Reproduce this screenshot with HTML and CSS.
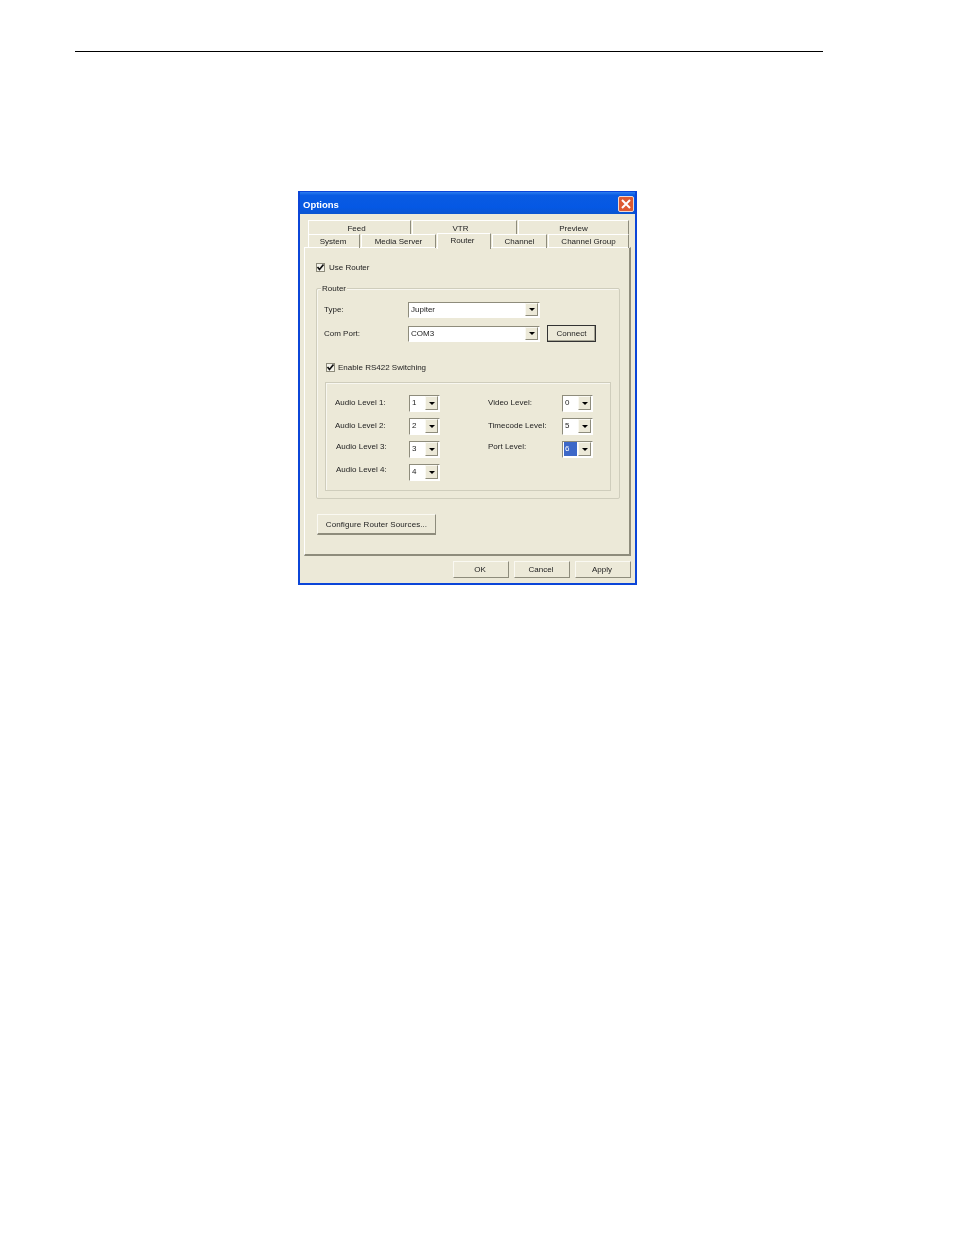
FILE: index.html
```html
<!DOCTYPE html>
<html lang="en">
<head>
    <meta charset="UTF-8">
    <title>Options</title>
    <link rel="stylesheet" href="styles.css">
</head>
<body>
    <!-- Page header rule -->
    <div class="page-rule"></div>

    <div class="dialog">
        <div class="title-bar">
            <span class="title-text">Options</span>
            <div class="close-btn">
                <svg width="14" height="14" viewBox="0 0 14 14">
                    <path d="M3 3L11 11M11 3L3 11" stroke="#fff" stroke-width="2" fill="none"/>
                </svg>
            </div>
        </div>

        <!-- Two rows of tabs -->
        <div class="tabs">
            <div class="tab-row">
                <div class="tab t-feed">Feed</div>
                <div class="tab t-vtr">VTR</div>
                <div class="tab t-preview">Preview</div>
            </div>
            <div class="tab-row front">
                <div class="tab t-system">System</div>
                <div class="tab t-media">Media Server</div>
                <div class="tab t-router active">Router</div>
                <div class="tab t-channel">Channel</div>
                <div class="tab t-group">Channel Group</div>
            </div>
        </div>

        <div class="panel">
            <div class="check-row">
                <div class="check">
                    <svg width="9" height="9" viewBox="0 0 9 9"><path d="M1.5 4L3.5 6.5L7.5 1.5" stroke="#111" stroke-width="1.7" fill="none"/></svg>
                </div>
                <span>Use Router</span>
            </div>

            <div class="group">
                <div class="legend">Router</div>

                <div class="form-row">
                    <label class="form-label">Type:</label>
                    <div class="combo combo-wide"><span class="value">Jupiter</span><span class="arrow"></span></div>
                </div>
                <div class="form-row">
                    <label class="form-label">Com Port:</label>
                    <div class="combo combo-wide"><span class="value">COM3</span><span class="arrow"></span></div>
                    <div class="btn btn-connect">Connect</div>
                </div>

                <div class="check-row check-enable">
                    <div class="check">
                        <svg width="9" height="9" viewBox="0 0 9 9"><path d="M1.5 4L3.5 6.5L7.5 1.5" stroke="#111" stroke-width="1.7" fill="none"/></svg>
                    </div>
                    <span>Enable RS422 Switching</span>
                </div>

                <div class="levels">
                    <label>Audio Level 1:</label>
                    <div class="combo"><span class="value">1</span><span class="arrow"></span></div>
                    <label>Video Level:</label>
                    <div class="combo"><span class="value">0</span><span class="arrow"></span></div>

                    <label>Audio Level 2:</label>
                    <div class="combo"><span class="value">2</span><span class="arrow"></span></div>
                    <label>Timecode Level:</label>
                    <div class="combo"><span class="value">5</span><span class="arrow"></span></div>

                    <label class="nudge raised">Audio Level 3:</label>
                    <div class="combo"><span class="value">3</span><span class="arrow"></span></div>
                    <label class="raised">Port Level:</label>
                    <div class="combo"><span class="value selected">6</span><span class="arrow"></span></div>

                    <label class="nudge raised">Audio Level 4:</label>
                    <div class="combo"><span class="value">4</span><span class="arrow"></span></div>
                </div>
            </div>

            <div class="btn btn-sources">Configure Router Sources...</div>
        </div>

        <div class="footer">
            <div class="btn btn-foot">OK</div>
            <div class="btn btn-foot">Cancel</div>
            <div class="btn btn-foot">Apply</div>
        </div>
    </div>
</body>
</html>
```

FILE: styles.css
```css
/* Page */
body {
    margin: 0;
    background-color: #fff;
    color: #222;
    font-family: "Liberation Sans", Arial, sans-serif;
    font-size: 8px;
}

.page-rule {
    height: 1px;
    width: 748px;
    margin: 51px 0 0 75px;
    background-color: #000;
}

/* Dialog window */
.dialog {
    box-sizing: border-box;
    width: 339px;
    height: 394px;
    margin: 139px 0 0 298px;
    border: 2px solid #0b45d8;
    border-top: 1px solid #0b45d8;
    background-color: #ece9d8;
    filter: blur(0.3px);
}

.title-bar {
    height: 22px;
    padding: 1px 1px 0 3px;
    box-sizing: border-box;
    display: flex;
    justify-content: space-between;
    align-items: center;
    background: linear-gradient(#2a7cf0 0, #0a5be2 15%, #0558e4 70%, #0a55d0 100%);
}

.title-text {
    color: #fff;
    font-size: 9.5px;
    font-weight: bold;
    padding-top: 1px;
}

.close-btn {
    box-sizing: border-box;
    width: 16px;
    height: 16px;
    border: 1px solid #f0d8d0;
    border-radius: 2px;
    background-color: #dd5a32;
    display: flex;
}

/* Tabs */
.tabs {
    margin: 6px 0 -1px 8px;
    width: 321px;
}

.tab-row {
    display: flex;
    height: 14px;
}

.tab {
    box-sizing: border-box;
    height: 14px;
    margin-right: 1px;
    border-top: 1px solid #fff;
    border-left: 1px solid #fff;
    border-right: 1px solid #8e8c7c;
    text-align: center;
    line-height: 15px;
}

.front .tab {
    line-height: 13px;
}

.t-feed { width: 103px; padding-right: 6px; }
.t-vtr { width: 105px; padding-right: 8px; }
.t-preview { width: 111px; margin-right: 0; }
.t-system { width: 52px; padding-right: 2px; }
.t-media { width: 75px; }
.t-router { width: 54px; padding-right: 3px; }
.t-channel { width: 55px; }
.t-group { width: 81px; margin-right: 0; }

.front .tab.active {
    position: relative;
    z-index: 1;
    height: 16px;
    margin-top: -1px;
    background-color: #ece9d8;
    line-height: 13px;
}

/* Main panel */
.panel {
    box-sizing: border-box;
    width: 327px;
    height: 309px;
    margin-left: 4px;
    padding: 14px 10px 0 11px;
    border-top: 1px solid #fff;
    border-left: 1px solid #fff;
    border-right: 2px solid #8e8c7c;
    border-bottom: 2px solid #8e8c7c;
}

.check-row {
    display: flex;
    align-items: center;
    gap: 4px;
    height: 10px;
}

.check {
    box-sizing: border-box;
    width: 9px;
    height: 9px;
    background-color: #f4f3ea;
    border: 1px solid #8e8c7c;
    display: flex;
    align-items: center;
    justify-content: center;
}

.check svg {
    flex: none;
}

/* Group box */
.group {
    position: relative;
    box-sizing: border-box;
    width: 304px;
    height: 211px;
    margin-top: 16px;
    padding: 13px 0 0 7px;
    border: 1px solid #cfcdbc;
    border-radius: 2px;
    box-shadow: inset 1px 1px 0 #f8f7f0;
}

.legend {
    position: absolute;
    top: -5px;
    left: 4px;
    padding: 0 1px;
    background-color: #ece9d8;
}

.form-row {
    display: flex;
    align-items: center;
    height: 16px;
    margin-bottom: 8px;
}

.form-label {
    width: 84px;
    padding-bottom: 1px;
}

/* Combo boxes */
.combo {
    box-sizing: border-box;
    width: 31px;
    height: 17px;
    display: flex;
    background-color: #fff;
    border: 1px solid #8e8c7c;
    border-right-color: #fff;
    border-bottom-color: #fff;
    padding: 0 1px 1px 1px;
}

.combo-wide {
    width: 132px;
    height: 16px;
}

.value {
    flex: 1;
    padding-left: 1px;
    line-height: 14px;
}

.value.selected {
    background-color: #3d68c8;
    color: #fff;
    margin-right: 1px;
}

.arrow {
    box-sizing: border-box;
    width: 13px;
    background-color: #ece9d8;
    border: 1px solid #faf9f2;
    border-right-color: #8e8c7c;
    border-bottom-color: #8e8c7c;
    display: flex;
    align-items: center;
    justify-content: center;
}

.arrow::after {
    content: "";
    border-left: 3.5px solid transparent;
    border-right: 3.5px solid transparent;
    border-top: 3.5px solid #000;
}

/* Buttons */
.btn {
    box-sizing: border-box;
    display: flex;
    align-items: center;
    justify-content: center;
    border: 1px solid #faf9f2;
    border-right-color: #8e8c7c;
    border-bottom-color: #8e8c7c;
    background-color: #ece9d8;
}

.btn-connect {
    width: 49px;
    height: 17px;
    margin: -1px 0 0 7px;
    border: 1px solid #333;
    box-shadow: inset -1px -1px 0 #a5a393;
}

.btn-sources {
    width: 119px;
    height: 21px;
    margin: 15px 0 0 1px;
    border-bottom-width: 2px;
    letter-spacing: 0.08px;
}

.footer {
    display: flex;
    justify-content: flex-end;
    gap: 5px;
    margin: 5px 4px 0 0;
}

.btn-foot {
    width: 56px;
    height: 17px;
    padding: 0 2px 1px 0;
}

/* Routing levels box */
.check-enable {
    margin: 20px 0 0 2px;
    gap: 3px;
}

.levels {
    box-sizing: border-box;
    width: 286px;
    height: 109px;
    margin: 10px 0 0 1px;
    padding: 12px 0 0 9px;
    border: 1px solid #cfcdbc;
    box-shadow: inset 1px 1px 0 #f8f7f0;
    display: grid;
    grid-template-columns: 74px 79px 74px 31px;
    grid-auto-rows: 17px;
    row-gap: 6px;
    align-items: center;
}

.levels label {
    padding-bottom: 2px;
}

.levels label.raised {
    padding-bottom: 6px;
}

.levels .combo {
    width: 31px;
}

.nudge {
    padding-left: 1px;
}
```
